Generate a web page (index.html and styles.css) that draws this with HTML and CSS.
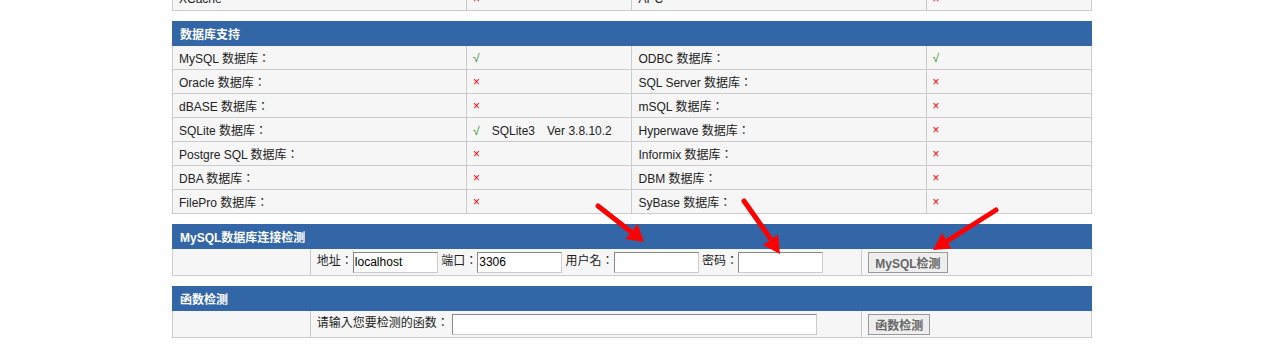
FILE: index.html
```html
<!DOCTYPE html>
<html lang="zh-CN">
<head>
    <meta charset="UTF-8">
    <title>PHP探针 | 数据库支持</title>
    <link rel="stylesheet" href="styles.css">
</head>
<body>
<div class="wrap">

    <!-- 组件支持（上一块的末行） -->
    <table class="box first">
        <colgroup><col class="w32"><col class="w18"><col class="w32"><col class="w18"></colgroup>
        <tr>
            <td>XCache</td>
            <td><span class="no">×</span></td>
            <td>APC</td>
            <td><span class="no">×</span></td>
        </tr>
    </table>

    <!-- 数据库支持 -->
    <table class="box">
        <colgroup><col class="w32"><col class="w18"><col class="w32"><col class="w18"></colgroup>
        <tr><th colspan="4">数据库支持</th></tr>
        <tr>
            <td>MySQL 数据库：</td>
            <td><span class="yes">√</span></td>
            <td>ODBC 数据库：</td>
            <td><span class="yes">√</span></td>
        </tr>
        <tr>
            <td>Oracle 数据库：</td>
            <td><span class="no">×</span></td>
            <td>SQL Server 数据库：</td>
            <td><span class="no">×</span></td>
        </tr>
        <tr>
            <td>dBASE 数据库：</td>
            <td><span class="no">×</span></td>
            <td>mSQL 数据库：</td>
            <td><span class="no">×</span></td>
        </tr>
        <tr>
            <td>SQLite 数据库：</td>
            <td><span class="yes">√</span>　SQLite3　Ver 3.8.10.2</td>
            <td>Hyperwave 数据库：</td>
            <td><span class="no">×</span></td>
        </tr>
        <tr>
            <td>Postgre SQL 数据库：</td>
            <td><span class="no">×</span></td>
            <td>Informix 数据库：</td>
            <td><span class="no">×</span></td>
        </tr>
        <tr>
            <td>DBA 数据库：</td>
            <td><span class="no">×</span></td>
            <td>DBM 数据库：</td>
            <td><span class="no">×</span></td>
        </tr>
        <tr>
            <td>FilePro 数据库：</td>
            <td><span class="no">×</span></td>
            <td>SyBase 数据库：</td>
            <td><span class="no">×</span></td>
        </tr>
    </table>

    <!-- MySQL数据库连接检测 -->
    <table class="box">
        <colgroup><col class="w15"><col class="w60"><col class="w25"></colgroup>
        <tr><th colspan="3">MySQL数据库连接检测</th></tr>
        <tr class="form-row">
            <td></td>
            <td>地址：<input type="text" class="txt" value="localhost"> 端口：<input type="text" class="txt" value="3306"> 用户名：<input type="text" class="txt"> 密码：<input type="password" class="txt"></td>
            <td><button type="button" class="btn">MySQL检测</button></td>
        </tr>
    </table>

    <!-- 函数检测 -->
    <table class="box">
        <colgroup><col class="w15"><col class="w60"><col class="w25"></colgroup>
        <tr><th colspan="3">函数检测</th></tr>
        <tr class="form-row">
            <td></td>
            <td>请输入您要检测的函数：<input type="text" class="txt long"></td>
            <td><button type="button" class="btn">函数检测</button></td>
        </tr>
    </table>

</div>

<!-- 标注箭头 -->
<svg class="marks" width="1268" height="364" viewBox="0 0 1268 364">
    <g stroke="#f00" stroke-width="5" stroke-linecap="round" fill="#f00">
        <line x1="598" y1="206" x2="630" y2="231" />
        <polygon points="644,242 625.5,239 637.5,224" stroke="none" />
        <line x1="744" y1="201" x2="770" y2="238" />
        <polygon points="780,254 763,245 778,234.5" stroke="none" />
        <line x1="996" y1="210" x2="948" y2="240.5" />
        <polygon points="933,250 942,233 951.5,248.5" stroke="none" />
    </g>
</svg>
</body>
</html>
```

FILE: styles.css
```css
body {
    margin: 0;
    padding: 0 4px 0 0;
    font-family: "Liberation Sans", Arial, "Noto Sans CJK TC", sans-serif;
    font-size: 12px;
    color: #222;
    background: #fff;
    position: relative;
    font-feature-settings: "locl" 0;
}
.wrap {
    width: 920px;
    margin: 0 auto;
}
.box {
    width: 100%;
    border-collapse: collapse;
    table-layout: fixed;
    margin-bottom: 10px;
}
.box.first {
    margin-top: -14px;
}
.box th {
    background: #3266a6;
    color: #fff;
    font-weight: bold;
    text-align: left;
    height: 23px;
    padding: 0 7px;
    border: 1px solid #3266a6;
}
.box td {
    background: #f6f6f6;
    border: 1px solid #ccc;
    height: 23px;
    padding: 0 6px;
    white-space: nowrap;
}
.w32 { width: 32%; }
.w18 { width: 18%; }
.w15 { width: 15%; }
.w60 { width: 60%; }
.w25 { width: 25%; }
.yes {
    color: #2a9a2a;
}
.no {
    color: #f00;
}
.form-row td {
    height: 26px;
}
.txt {
    box-sizing: border-box;
    width: 85px;
    height: 21px;
    padding: 0 1px;
    border: 1px solid #888;
    border-right-color: #ccc;
    border-bottom-color: #ccc;
    font-family: "Liberation Sans", Arial, sans-serif;
    font-size: 12px;
    color: #000;
    vertical-align: middle;
    margin: 0;
}
.txt.long {
    width: 365px;
    margin-left: 3px;
}
.btn {
    height: 21px;
    padding: 0 6px;
    border: 1px solid #999;
    background: #eee;
    color: #666;
    font-family: "Liberation Sans", Arial, "Noto Sans CJK TC", sans-serif;
    font-size: 12px;
    font-weight: bold;
    vertical-align: middle;
}
.marks {
    position: absolute;
    top: 0;
    left: 0;
    pointer-events: none;
}
```
